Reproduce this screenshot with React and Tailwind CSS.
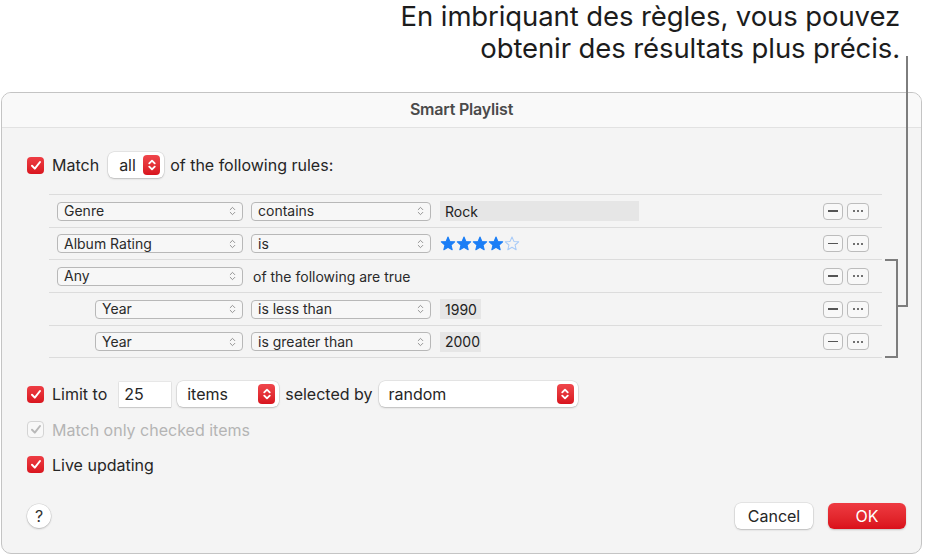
import React from "react";

const Chevrons = ({ color = "#6b6b6b", w = 7, h = 11, sw = 1.3 }) => (
	<svg width={w} height={h} viewBox="0 0 7 11" fill="none">
		<path d="M1 4 L3.5 1.5 L6 4" stroke={color} strokeWidth={sw} strokeLinecap="round" strokeLinejoin="round" />
		<path d="M1 7 L3.5 9.5 L6 7" stroke={color} strokeWidth={sw} strokeLinecap="round" strokeLinejoin="round" />
	</svg>
);

const Stepper = () => (
	<div className="w-[17px] h-[20px] rounded-[4px] bg-gradient-to-b from-[#f0464c] to-[#d8121d] flex items-center justify-center">
		<Chevrons color="#ffffff" w={8} h={12} sw={1.7} />
	</div>
);

const Check = ({ color = "#ffffff" }) => (
	<svg width="12" height="11" viewBox="0 0 12 11" fill="none">
		<path d="M2 5.8 L4.8 8.6 L10 2" stroke={color} strokeWidth="2" strokeLinecap="round" strokeLinejoin="round" />
	</svg>
);

const Checkbox = ({ disabled }) =>
	disabled ? (
		<div className="w-[17px] h-[17px] rounded-[4px] border border-[#d4d4d4] bg-[#f8f8f8] flex items-center justify-center">
			<Check color="#b9b9b9" />
		</div>
	) : (
		<div className="w-[17px] h-[17px] rounded-[4px] bg-gradient-to-b from-[#ee3c43] to-[#d9141e] flex items-center justify-center">
			<Check />
		</div>
	);

const Popup = ({ label, className }) => (
	<div className={`h-[26px] rounded-[6px] bg-white shadow-[0_0_0_0.5px_rgba(0,0,0,0.12),0_1px_2px_rgba(0,0,0,0.18)] flex items-center justify-between pl-[10px] pr-[4px] text-[16px] text-[#262626] ${className}`}>
		<span>{label}</span>
		<Stepper />
	</div>
);

const Select = ({ label, className }) => (
	<div className={`h-[19px] rounded-[4px] border border-[#b8b8b8] bg-[#f7f7f7] flex items-center justify-between pl-[6px] pr-[6px] text-[14px] text-[#2a2a2a] ${className}`}>
		<span className="-mt-[1px]">{label}</span>
		<Chevrons color="#8a8a8a" w={7} h={10} sw={1} />
	</div>
);

const Star = ({ filled }) => (
	<svg width="16" height="15" viewBox="0 0 24 23">
		<path
			d="M12 1.5 L14.9 8.3 L22.3 8.9 L16.7 13.8 L18.4 21 L12 17.2 L5.6 21 L7.3 13.8 L1.7 8.9 L9.1 8.3 Z"
			fill={filled ? "#1b7ef6" : "none"}
			stroke={filled ? "#1b7ef6" : "#a8cbf8"}
			strokeWidth="1.6"
			strokeLinejoin="round"
		/>
	</svg>
);

const RowButtons = () => (
	<div className="flex items-center gap-[4px] mr-[13px]">
		<div className="w-[20px] h-[17px] rounded-[4px] border border-[#bcbcbc] bg-[#f8f8f8] flex items-center justify-center">
			<div className="w-[10px] h-[1.5px] bg-[#555]" />
		</div>
		<div className="w-[22px] h-[17px] rounded-[4px] border border-[#bcbcbc] bg-[#f8f8f8] flex items-center justify-center gap-[2px]">
			<div className="w-[2px] h-[2px] rounded-full bg-[#444]" />
			<div className="w-[2px] h-[2px] rounded-full bg-[#444]" />
			<div className="w-[2px] h-[2px] rounded-full bg-[#444]" />
		</div>
	</div>
);

const RuleRow = ({ h, nested, children }) => (
	<div className={`${h} border-b border-[#dcdcdc] flex items-center`}>
		<div className={`flex-1 flex items-center ${nested ? "pl-[46px]" : "pl-[8px]"}`}>{children}</div>
		<RowButtons />
	</div>
);

const ValueField = ({ value, className }) => (
	<div className={`ml-[9px] h-[20px] bg-[#e6e6e6] flex items-center pl-[5px] text-[14px] text-[#222] ${className}`}>
		{value}
	</div>
);

export default function App() {
	return (
		<div className="relative w-[931px] h-[556px] bg-white overflow-hidden font-['Inter',sans-serif] antialiased">
			<div className="h-[92px] pr-[31px] text-right text-[27.5px] leading-[32px] text-[#1c1c1c] tracking-[-0.1px]">
				<div>En imbriquant des règles, vous pouvez</div>
				<div>obtenir des résultats plus précis.</div>
			</div>

			<div className="ml-[1px] w-[921px] h-[462px] rounded-[10px] border border-[#c4c4c4] bg-[#f4f4f4] overflow-hidden flex flex-col">
				<div className="h-[35px] shrink-0 bg-[#f9f9f9] border-b border-[#e2e2e2] flex items-center justify-center pb-[2px] text-[16px] font-semibold tracking-[-0.2px] text-[#4a4a4a]">
					Smart Playlist
				</div>

				<div className="flex-1 flex flex-col pl-[25px] pt-[24px]">
					<div className="h-[26px] flex items-center text-[16px] text-[#262626]">
						<Checkbox />
						<span className="ml-[8px]">Match</span>
						<Popup label="all" className="ml-[9px] w-[56px] pl-[11px]" />
						<span className="ml-[6px]">of the following rules:</span>
					</div>

					<div className="mt-[16px] ml-[22px] mr-[39px] border-t border-[#dcdcdc]">
						<RuleRow h="h-[33px]">
							<Select label="Genre" className="w-[186px]" />
							<Select label="contains" className="ml-[8px] w-[180px]" />
							<ValueField value="Rock" className="w-[199px]" />
						</RuleRow>
						<RuleRow h="h-[32px]">
							<Select label="Album Rating" className="w-[186px]" />
							<Select label="is" className="ml-[8px] w-[180px]" />
							<div className="ml-[9px] flex items-center">
								<Star filled />
								<Star filled />
								<Star filled />
								<Star filled />
								<Star />
							</div>
						</RuleRow>
						<RuleRow h="h-[33px]">
							<Select label="Any" className="w-[186px]" />
							<span className="ml-[10px] text-[14px] text-[#2a2a2a]">of the following are true</span>
						</RuleRow>
						<RuleRow h="h-[33px]" nested>
							<Select label="Year" className="w-[148px]" />
							<Select label="is less than" className="ml-[8px] w-[180px]" />
							<ValueField value="1990" className="w-[41px]" />
						</RuleRow>
						<RuleRow h="h-[32px]" nested>
							<Select label="Year" className="w-[148px]" />
							<Select label="is greater than" className="ml-[8px] w-[180px]" />
							<ValueField value="2000" className="w-[41px]" />
						</RuleRow>
					</div>

					<div className="mt-[23px] h-[26px] flex items-center text-[16px] text-[#262626]">
						<Checkbox />
						<span className="ml-[8px]">Limit to</span>
						<div className="ml-[12px] w-[52px] h-[25px] bg-white shadow-[0_0_0_0.5px_rgba(0,0,0,0.1),0_1px_1px_rgba(0,0,0,0.12)] flex items-center pl-[5px]">
							25
						</div>
						<Popup label="items" className="ml-[6px] w-[102px]" />
						<span className="ml-[6px]">selected by</span>
						<Popup label="random" className="ml-[6px] w-[199px]" />
					</div>

					<div className="mt-[14px] h-[17px] flex items-center text-[16px] text-[#b4b4b4]">
						<Checkbox disabled />
						<span className="ml-[8px]">Match only checked items</span>
					</div>

					<div className="mt-[18px] h-[17px] flex items-center text-[16px] text-[#262626]">
						<Checkbox />
						<span className="ml-[8px]">Live updating</span>
					</div>

					<div className="mt-[30px] h-[26px] flex items-center pr-[15px]">
						<div className="w-[24px] h-[24px] rounded-full bg-white shadow-[0_0_0_0.5px_rgba(0,0,0,0.12),0_1px_2px_rgba(0,0,0,0.2)] flex items-center justify-center text-[16px] text-[#333]">
							?
						</div>
						<div className="flex-1" />
						<div className="w-[78px] h-[26px] rounded-[6px] bg-white shadow-[0_0_0_0.5px_rgba(0,0,0,0.12),0_1px_2px_rgba(0,0,0,0.18)] flex items-center justify-center text-[16px] text-[#262626]">
							Cancel
						</div>
						<div className="ml-[15px] w-[78px] h-[26px] rounded-[6px] bg-gradient-to-b from-[#ee3a41] to-[#da0f1a] shadow-[0_1px_2px_rgba(0,0,0,0.2)] flex items-center justify-center text-[16px] text-white">
							OK
						</div>
					</div>
				</div>
			</div>

			<svg className="absolute inset-0 pointer-events-none" width="931" height="556">
				<path d="M907 56 V306 H897" stroke="#7d7d7d" strokeWidth="2" fill="none" />
				<path d="M885 260 H897 V357 H885" stroke="#7d7d7d" strokeWidth="2" fill="none" />
			</svg>
		</div>
	);
}
